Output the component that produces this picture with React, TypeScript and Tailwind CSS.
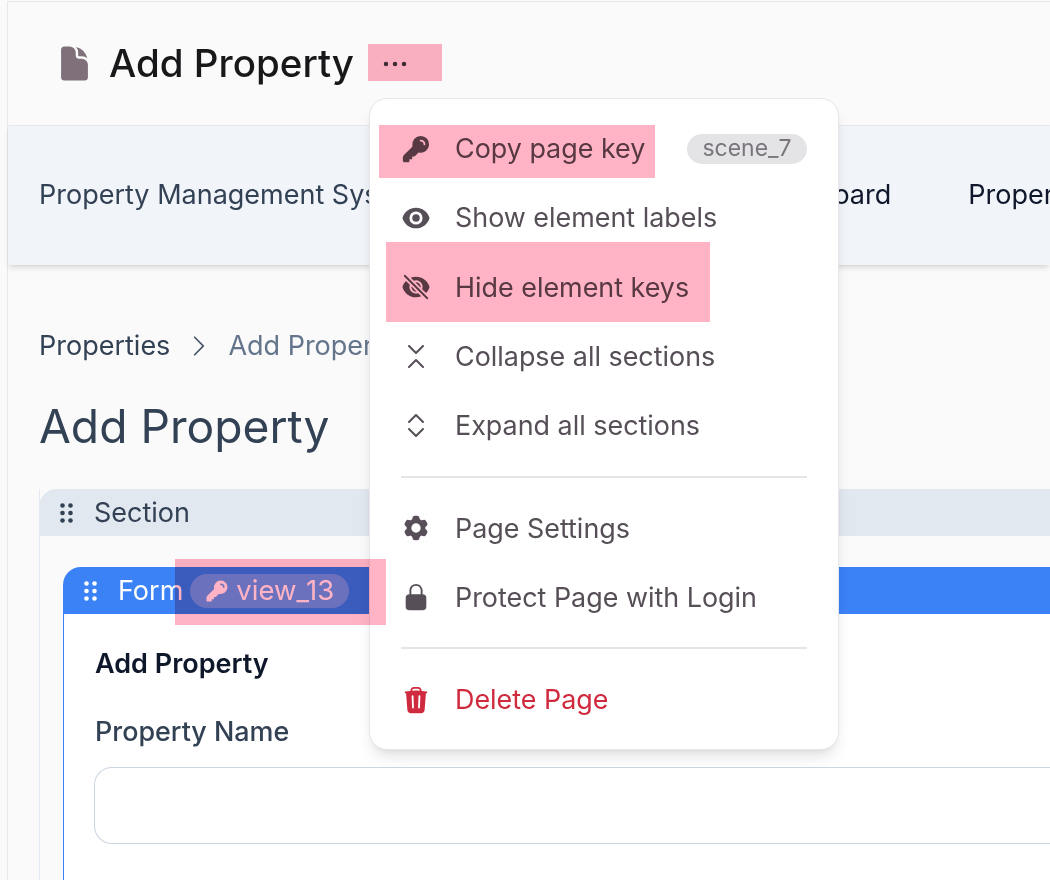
import {
  HiChevronRight,
  HiCog6Tooth,
  HiDocument,
  HiEllipsisHorizontal,
  HiEye,
  HiEyeSlash,
  HiKey,
  HiLockClosed,
  HiTrash,
} from "react-icons/hi2";

function Grip({ className }: { className: string }) {
  return (
    <svg viewBox="0 0 13 20" className={className} fill="currentColor">
      <circle cx="2.5" cy="2.5" r="2.3" />
      <circle cx="10.5" cy="2.5" r="2.3" />
      <circle cx="2.5" cy="10" r="2.3" />
      <circle cx="10.5" cy="10" r="2.3" />
      <circle cx="2.5" cy="17.5" r="2.3" />
      <circle cx="10.5" cy="17.5" r="2.3" />
    </svg>
  );
}

function ChevronsIn() {
  return (
    <svg viewBox="0 0 16 23" className="h-[23px] w-[16px]" fill="none" stroke="currentColor" strokeWidth="2" strokeLinecap="round" strokeLinejoin="round">
      <path d="M1 1l7 7 7-7M1 22l7-7 7 7" />
    </svg>
  );
}

function ChevronsOut() {
  return (
    <svg viewBox="0 0 16 23" className="h-[23px] w-[16px]" fill="none" stroke="currentColor" strokeWidth="2" strokeLinecap="round" strokeLinejoin="round">
      <path d="M1 8l7-7 7 7M1 15l7 7 7-7" />
    </svg>
  );
}

function MenuRow({ icon, label, danger, badge }: { icon: React.ReactNode; label: string; danger?: boolean; badge?: string }) {
  return (
    <div className={`flex h-[69.3px] items-center pl-[31px] pr-[31px] ${danger ? "text-[#d02a3e]" : "text-[#574f57]"}`}>
      <span className="flex w-[30px] flex-none items-center justify-center text-[30px]">{icon}</span>
      <span className="ml-[24px] text-[26.9px] leading-none">{label}</span>
      {badge && (
        <span className="ml-auto flex h-[30px] w-[120px] items-center justify-center rounded-full bg-[#e4e4e7] text-[23px] text-[#7a757c]">
          {badge}
        </span>
      )}
    </div>
  );
}

function Mark({ className }: { className: string }) {
  return <div className={`pointer-events-none absolute z-20 bg-[#ffb3c4] mix-blend-multiply ${className}`} />;
}

export default function App() {
  return (
    <div className="relative h-[880px] w-[1050px] overflow-hidden bg-[#fafafa] font-['Inter',sans-serif]">
      <div className="ml-[7px] mt-px flex h-[879px] flex-col border-l border-t border-[#e8e8e8]">
        {/* page title */}
        <header className="flex h-[123px] flex-none items-center pl-[47px]">
          <HiDocument className="text-[39px] text-[#7f7079]" />
          <h2 className="ml-[15px] text-[38.5px] font-medium text-[#18181b]">Add Property</h2>
          <HiEllipsisHorizontal className="ml-[23px] text-[36px] text-[#3f3f46]" />
        </header>

        {/* app nav */}
        <nav className="flex h-[140px] flex-none items-center border-t border-[#e8e8e8] bg-[#f1f4f9] pl-[31px] text-[27px] shadow-md">
          <span className="w-[713px] flex-none text-[#334155]">Property Management System</span>
          <span className="flex-none text-[#0f172a]">Dashboard</span>
          <span className="ml-[77px] flex-none text-[#0f172a]">Properties</span>
        </nav>

        <main className="flex min-h-0 flex-1 flex-col pl-[31px]">
          <div className="mt-[63px] flex items-center text-[27px] leading-[36px] text-[#334155]">
            Properties
            <HiChevronRight className="ml-[15px] text-[28px] text-[#475569]" />
            <span className="ml-[15px] text-[#64748b]">Add Property</span>
          </div>
          <h1 className="mt-[33px] text-[46.2px] leading-[58px] text-[#334155]">Add Property</h1>

          {/* section */}
          <section className="mt-[34px] flex-1 border-l border-[#e2e8f0]">
            <div className="-ml-px flex h-[47px] items-center rounded-tl-[18px] bg-[#e2e8f0] pl-[21px] text-[27px] text-[#334155]">
              <Grip className="h-[20px] w-[13px]" />
              <span className="ml-[21px] pt-[2px]">Section</span>
            </div>
            <div className="ml-[23px] mt-[31px]">
              <div className="flex h-[47px] items-center rounded-tl-[18px] bg-[#3b82f6] pl-[21px] text-[27px] text-white">
                <Grip className="h-[20px] w-[13px]" />
                <span className="ml-[21px] pt-[2px]">Form</span>
                <span className="ml-[7px] flex h-[34px] w-[159px] items-center rounded-full bg-white/25 pl-[15px] text-white">
                  <HiKey className="text-[24px]" />
                  <span className="ml-[7px] text-[27.5px]">view_13</span>
                </span>
              </div>
              <div className="h-[300px] border-l border-[#3b82f6]">
                <div className="h-full rounded-tl-[8px] bg-white pl-[31px]">
                  <h3 className="pt-[32px] text-[27px] font-semibold leading-[36px] text-[#0f172a]">Add Property</h3>
                  <label className="mt-[31px] block text-[26.9px] font-medium leading-[36px] text-[#334155]">Property Name</label>
                  <div className="-ml-px mt-[18px] h-[77px] rounded-l-[18px] border border-r-0 border-[#cbd5e1] bg-white" />
                </div>
              </div>
            </div>
          </section>
        </main>
      </div>

      {/* page actions dropdown */}
      <div className="absolute left-[369px] top-[98px] z-10 w-[470px] rounded-[18px] border border-[#e7e7e9] bg-white pb-[15px] pt-[15px] shadow-lg">
        <MenuRow icon={<HiKey />} label="Copy page key" badge="scene_7" />
        <MenuRow icon={<HiEye />} label="Show element labels" />
        <MenuRow icon={<HiEyeSlash />} label="Hide element keys" />
        <MenuRow icon={<ChevronsIn />} label="Collapse all sections" />
        <MenuRow icon={<ChevronsOut />} label="Expand all sections" />
        <div className="mx-[31px] mb-[15px] mt-[16px] h-[2px] bg-[#e4e4e7]" />
        <MenuRow icon={<HiCog6Tooth />} label="Page Settings" />
        <MenuRow icon={<HiLockClosed />} label="Protect Page with Login" />
        <div className="mx-[31px] mb-[16px] mt-[15px] h-[2px] bg-[#e4e4e7]" />
        <MenuRow danger icon={<HiTrash />} label="Delete Page" />
      </div>

      {/* annotation highlights */}
      <Mark className="left-[368px] top-[44px] h-[37px] w-[74px]" />
      <Mark className="left-[379px] top-[125px] h-[53px] w-[276px]" />
      <Mark className="left-[386px] top-[242px] h-[80px] w-[324px]" />
      <Mark className="left-[175px] top-[559px] h-[66px] w-[211px]" />
    </div>
  );
}
